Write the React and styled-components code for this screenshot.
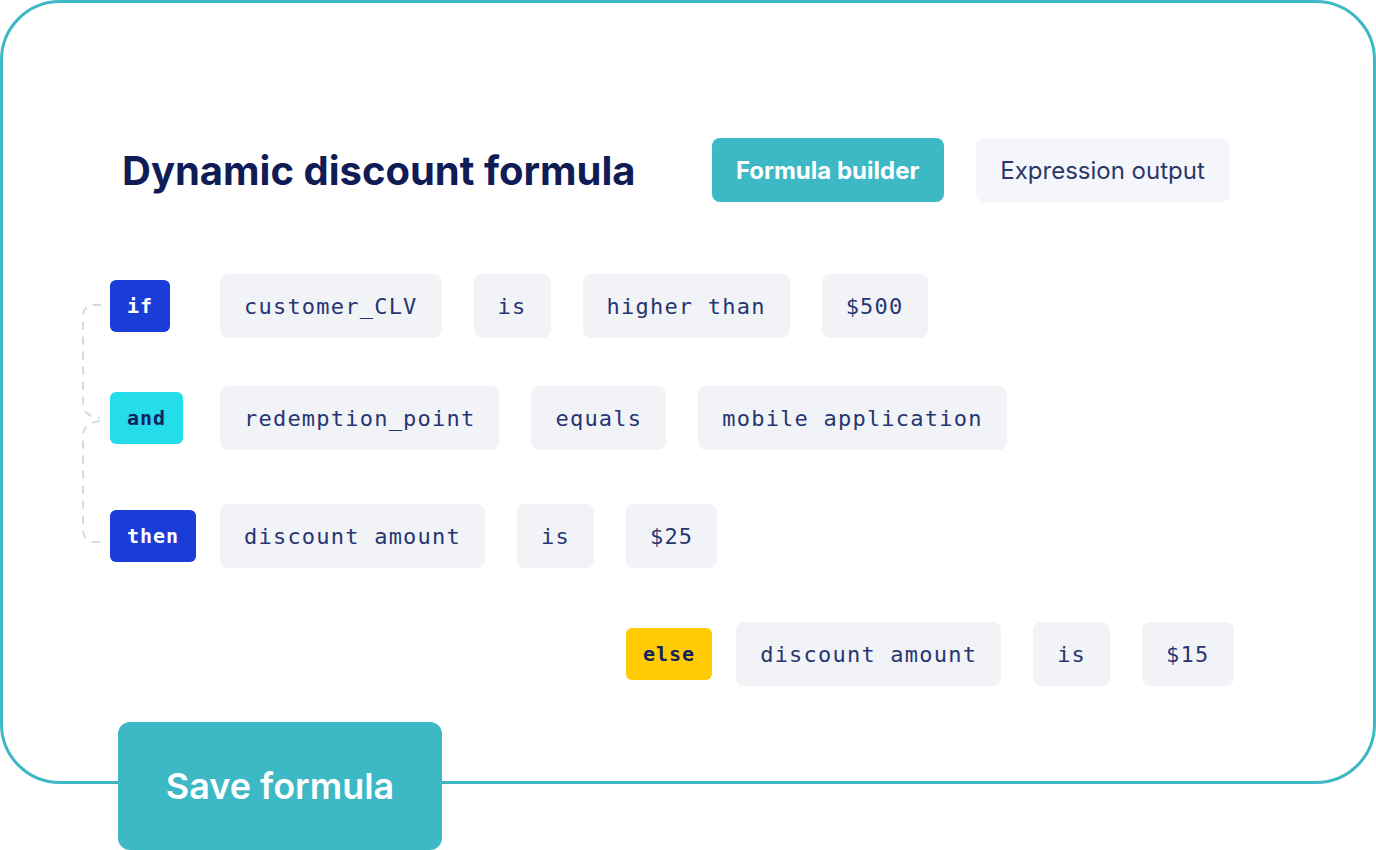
import React from 'react'
import styled, { createGlobalStyle } from 'styled-components'

const GlobalStyle = createGlobalStyle`
  html, body {
    margin: 0;
    padding: 0;
    background: #ffffff;
  }
  body {
    font-family: Inter, "Noto Sans", sans-serif;
  }
`

const Page = styled.div`
  width: 1376px;
  height: 850px;
`

const Card = styled.div`
  position: relative;
  box-sizing: border-box;
  width: 1376px;
  height: 784px;
  border: 3px solid #3db8c5;
  border-radius: 60px;
  padding: 135px 0 0 107px;
`

const Header = styled.div`
  display: flex;
  align-items: center;
  height: 64px;
  padding-left: 12px;
`

const Title = styled.h1`
  margin: 0 76px 0 0;
  font-size: 40px;
  font-weight: 700;
  color: #0f1c55;
`

const Tabs = styled.div`
  display: flex;
  gap: 32px;
`

const Tab = styled.button`
  height: 64px;
  width: ${p => p.$width}px;
  border: none;
  border-radius: 8px;
  font-family: Inter, sans-serif;
  font-size: 24px;
  font-weight: ${p => (p.$active ? 700 : 400)};
  background: ${p => (p.$active ? '#3db8c5' : '#f5f6fb')};
  color: ${p => (p.$active ? '#ffffff' : '#2b3867')};
  cursor: pointer;
`

const Rows = styled.div`
  position: relative;
  display: flex;
  flex-direction: column;
  margin-top: 72px;
`

const Connector = styled.svg`
  position: absolute;
  left: -107px;
  top: -274px;
  width: 200px;
  height: 700px;
  pointer-events: none;
`

const Row = styled.div`
  display: flex;
  align-items: center;
  height: 64px;
  margin-top: ${p => p.$top}px;
  margin-left: ${p => p.$indent || 0}px;
`

const BadgeCell = styled.div`
  width: ${p => (p.$fixed ? '110px' : 'auto')};
  margin-right: ${p => (p.$fixed ? 0 : 24)}px;
  flex-shrink: 0;
`

const badgeColors = {
  if: { bg: '#1a3cd8', fg: '#ffffff' },
  and: { bg: '#24dcea', fg: '#132160' },
  then: { bg: '#1a3cd8', fg: '#ffffff' },
  else: { bg: '#ffcb05', fg: '#132160' },
}

const Badge = styled.span`
  display: inline-flex;
  align-items: center;
  box-sizing: border-box;
  height: 52px;
  padding: 0 17px;
  border-radius: 6px;
  font-family: "DejaVu Sans Mono", "Liberation Mono", monospace;
  font-size: 20px;
  font-weight: 700;
  letter-spacing: 1px;
  background: ${p => badgeColors[p.$kind].bg};
  color: ${p => badgeColors[p.$kind].fg};
`

const Chips = styled.div`
  display: flex;
  gap: 32px;
`

const Chip = styled.span`
  display: inline-flex;
  align-items: center;
  box-sizing: border-box;
  height: 64px;
  padding: 0 24px;
  border-radius: 8px;
  background: #f2f3f7;
  font-family: "DejaVu Sans Mono", "Liberation Mono", monospace;
  font-size: 22px;
  letter-spacing: 1.22px;
  color: #263672;
  white-space: pre;
`

const SaveButton = styled.button`
  position: relative;
  display: block;
  width: 324px;
  height: 128px;
  margin: -62px 0 0 118px;
  border: none;
  border-radius: 12px;
  background: #3db8c5;
  color: #ffffff;
  font-family: Inter, sans-serif;
  font-size: 36px;
  font-weight: 600;
  cursor: pointer;
`

const rows = [
  { kind: 'if', top: 0, chips: ['customer_CLV', 'is', 'higher than', '$500'] },
  { kind: 'and', top: 48, chips: ['redemption_point', 'equals', 'mobile application'] },
  { kind: 'then', top: 54, chips: ['discount amount', 'is', '$25'] },
]

export default function App() {
  return (
    <Page>
      <GlobalStyle />
      <Card>
        <Header>
          <Title>Dynamic discount formula</Title>
          <Tabs>
            <Tab $active $width={232}>Formula builder</Tab>
            <Tab $width={254}>Expression output</Tab>
          </Tabs>
        </Header>
        <Rows>
          <Connector viewBox="0 0 200 700">
            <path
              d="M98 305 H92 Q80 305 80 317 V404 Q80 416 97 418"
              fill="none"
              stroke="#d5d8e6"
              strokeWidth="2"
              strokeDasharray="8 7"
            />
            <path
              d="M97 421 Q80 423 80 436 V528 Q80 542 92 542 H98"
              fill="none"
              stroke="#d5d8e6"
              strokeWidth="2"
              strokeDasharray="8 7"
            />
          </Connector>
          {rows.map(r => (
            <Row key={r.kind} $top={r.top}>
              <BadgeCell $fixed>
                <Badge $kind={r.kind}>{r.kind}</Badge>
              </BadgeCell>
              <Chips>
                {r.chips.map(c => (
                  <Chip key={c}>{c}</Chip>
                ))}
              </Chips>
            </Row>
          ))}
          <Row $top={54} $indent={516}>
            <BadgeCell>
              <Badge $kind="else">else</Badge>
            </BadgeCell>
            <Chips>
              <Chip>discount amount</Chip>
              <Chip>is</Chip>
              <Chip>$15</Chip>
            </Chips>
          </Row>
        </Rows>
      </Card>
      <SaveButton>Save formula</SaveButton>
    </Page>
  )
}
